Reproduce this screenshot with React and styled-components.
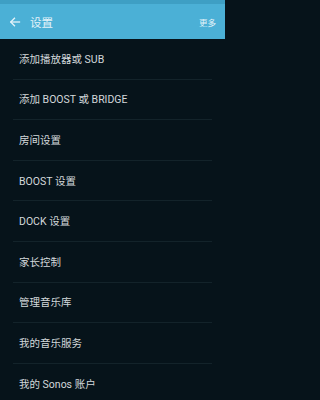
import React from 'react';
import styled, { createGlobalStyle } from 'styled-components';

const Global = createGlobalStyle`
    html, body {
        margin: 0;
        padding: 0;
        background: #06131a;
    }
    body {
        font-family: Roboto, "Noto Sans CJK SC", sans-serif;
    }
`;

// 전체 화면
const Screen = styled.div`
    width: 225px;
    height: 400px;
    display: flex;
    flex-direction: column;
    background: #06131a;
    overflow: hidden;
`;

// 상태 표시줄
const StatusBar = styled.div`
    height: 4px;
    flex-shrink: 0;
    background: #3e9fc4;
`;

// 상단 바
const AppBar = styled.div`
    height: 35px;
    flex-shrink: 0;
    display: flex;
    align-items: center;
    padding: 0 8px;
    background: #4bb0d6;
`;

const BackButton = styled.div`
    width: 14px;
    height: 14px;
    display: flex;
    align-items: center;
    justify-content: center;
    margin-right: 8px;
`;

const Title = styled.div`
    flex-grow: 1;
    font-size: 11.5px;
    color: #e4f3f9;
`;

const More = styled.div`
    font-size: 8.5px;
    color: #e4f3f9;
    padding-right: 1px;
`;

// 목록
const List = styled.div`
    display: flex;
    flex-direction: column;
    padding: 0 13px;
`;

const Row = styled.div`
    height: 40.6px;
    flex-shrink: 0;
    display: flex;
    align-items: center;
    padding: 0 0 1px 6px;
    font-size: 10.5px;
    color: #d3d8da;
    border-bottom: 1px solid ${props => (props.$last ? 'transparent' : '#13232a')};
    box-sizing: border-box;
`;

const items = [
    '添加播放器或 SUB',
    '添加 BOOST 或 BRIDGE',
    '房间设置',
    'BOOST 设置',
    'DOCK 设置',
    '家长控制',
    '管理音乐库',
    '我的音乐服务',
    '我的 Sonos 账户',
];

const App = () => (
    <Screen>
        <Global />
        <StatusBar />
        <AppBar>
            <BackButton>
                <svg width="12" height="12" viewBox="0 0 24 24" fill="none" stroke="#e4f3f9" strokeWidth="2.6" strokeLinecap="square">
                    <path d="M21 12H4" />
                    <path d="M11 4.5L3.5 12L11 19.5" />
                </svg>
            </BackButton>
            <Title>设置</Title>
            <More>更多</More>
        </AppBar>
        <List>
            {items.map((item, i) => (
                <Row key={item} $last={i === items.length - 1}>{item}</Row>
            ))}
        </List>
    </Screen>
);

export default App;
